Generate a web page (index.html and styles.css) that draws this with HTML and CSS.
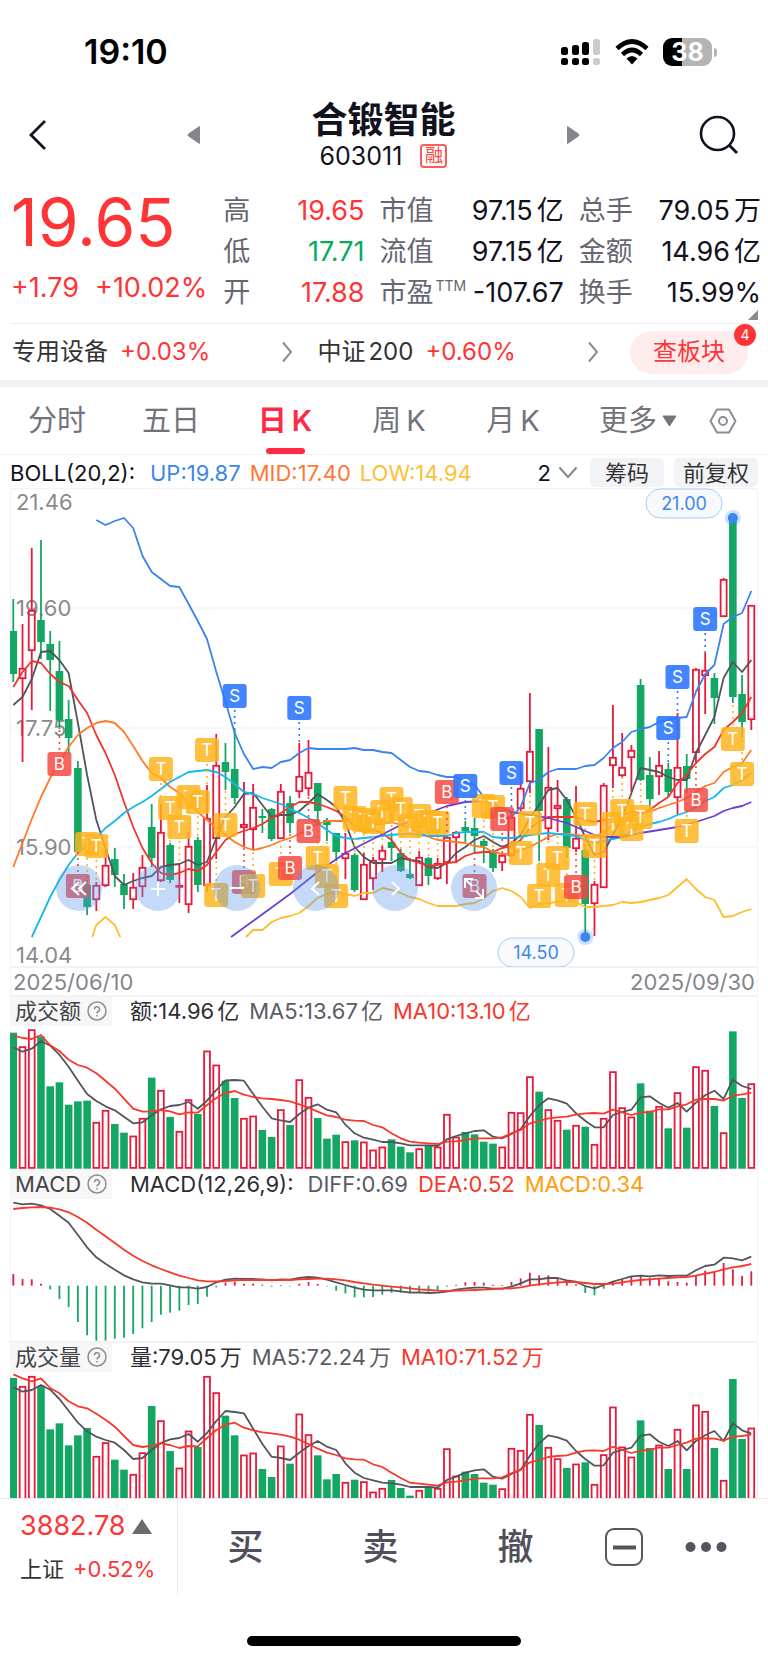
FILE: index.html
```html
<!DOCTYPE html>
<html lang="zh-CN">
<head>
<meta charset="utf-8">
<meta name="viewport" content="width=device-width, initial-scale=1">
<title>合锻智能 603011</title>
<link rel="stylesheet" href="styles.css">
</head>
<body>
<div class="status">
  <span class="clock">19:10</span>
  <div class="status-icons">
    <svg width="40" height="28" viewBox="0 0 40 28" aria-label="信号"><g fill="#000"><rect x="0" y="9" width="7" height="8" rx="2.5"/><rect x="11" y="7" width="7" height="10" rx="2.5"/><rect x="21" y="4" width="7" height="13" rx="2.5"/><rect x="0" y="20" width="7" height="7" rx="2.5"/><rect x="11" y="20" width="7" height="7" rx="2.5"/><rect x="21" y="20" width="7" height="7" rx="2.5"/></g><g fill="#ccc"><rect x="32" y="1" width="7" height="16" rx="2.5"/><rect x="32" y="20" width="7" height="7" rx="2.5"/></g></svg>
    <svg width="34" height="26" viewBox="0 0 34 26" aria-label="无线网络"><g fill="none" stroke="#000" stroke-width="4.6"><path d="M2 9.5Q17-4.500 32 9.500"/><path d="M7.500 15.500Q17 6.500 26.500 15.500"/></g><path d="M11.500 19.500Q17 14.500 22.500 19.500L17 25.500Z"/></svg>
    <div class="battery"><span>38</span></div>
  </div>
</div>

<header class="head">
  <button class="icon-btn" aria-label="返回"><svg width="20" height="32" viewBox="0 0 20 32"><path d="M17 2L3 16l14 14" fill="none" stroke="#12121e" stroke-width="2.8"/></svg></button>
  <button class="icon-btn" aria-label="上一只"><svg width="14" height="20" viewBox="0 0 14 20"><path d="M12.500 1.500v17L1.500 11q-1-1 0-2Z" fill="#85858f" stroke="#85858f" stroke-linejoin="round"/></svg></button>
  <div class="title">
    <h1>合锻智能</h1>
    <p>603011<span class="margin-tag">融</span></p>
  </div>
  <button class="icon-btn" aria-label="下一只"><svg width="14" height="20" viewBox="0 0 14 20"><path d="M1.500 1.500v17L12.500 11q1-1 0-2Z" fill="#85858f" stroke="#85858f" stroke-linejoin="round"/></svg></button>
  <button class="icon-btn" aria-label="搜索"><svg width="40" height="40" viewBox="0 0 40 40"><circle cx="18.500" cy="18.500" r="16.500" fill="none" stroke="#12121e" stroke-width="2.600"/><path d="M30 30l8 8" stroke="#12121e" stroke-width="2.800"/></svg></button>
</header>

<section class="quote">
  <div class="price">
    <strong>19.65</strong>
    <div class="change"><span>+1.79</span><span>+10.02%</span></div>
  </div>
  <dl class="facts">
    <div><dt>高</dt><dd class="up">19.65</dd></div>
    <div><dt>低</dt><dd class="down">17.71</dd></div>
    <div><dt>开</dt><dd class="up">17.88</dd></div>
  </dl>
  <dl class="facts">
    <div><dt>市值</dt><dd>97.15<i>亿</i></dd></div>
    <div><dt>流值</dt><dd>97.15<i>亿</i></dd></div>
    <div><dt>市盈<sup>TTM</sup></dt><dd>-107.67</dd></div>
  </dl>
  <dl class="facts">
    <div><dt>总手</dt><dd>79.05<i>万</i></dd></div>
    <div><dt>金额</dt><dd>14.96<i>亿</i></dd></div>
    <div><dt>换手</dt><dd>15.99%</dd></div>
  </dl>
  <svg class="corner" width="10" height="10" viewBox="0 0 10 10"><path d="M10 0v10H0Z" fill="#8a8a94"/></svg>
</section>

<section class="sectors">
  <a href="#equipment"><span>专用设备</span><em>+0.03%</em><svg width="12" height="22" viewBox="0 0 12 22"><path d="M2 1.500l8 9.500-8 9.500" fill="none" stroke="#8c8c94" stroke-width="2"/></svg></a>
  <a href="#csi200"><span>中证<i>200</i></span><em>+0.60%</em><svg width="12" height="22" viewBox="0 0 12 22"><path d="M2 1.500l8 9.500-8 9.500" fill="none" stroke="#8c8c94" stroke-width="2"/></svg></a>
  <button class="board">查板块<b>4</b></button>
</section>

<nav class="tabs">
  <button>分时</button>
  <button>五日</button>
  <button class="active">日<i>K</i></button>
  <button>周<i>K</i></button>
  <button>月<i>K</i></button>
  <button>更多<svg width="15" height="12" viewBox="0 0 15 12"><path d="M1 1h13L7.500 11Z" fill="#73737c" stroke="#73737c" stroke-linejoin="round"/></svg></button>
  <button class="gear" aria-label="设置"><svg width="28" height="28" viewBox="0 0 28 28"><path d="M8 2.500h12L26.500 14 20 25.500H8L1.500 14Z" fill="none" stroke="#8c8c94" stroke-width="2" stroke-linejoin="round"/><circle cx="14" cy="14" r="4" fill="none" stroke="#8c8c94" stroke-width="2"/></svg></button>
</nav>

<section class="indicator">
  <span>BOLL(20,2):</span><span class="c-up">UP:19.87</span><span class="c-mid">MID:17.40</span><span class="c-low">LOW:14.94</span>
  <div class="tools">
    <button class="count">2<svg width="20" height="13" viewBox="0 0 20 13"><path d="M1.500 1.500L10 11l8.500-9.500" fill="none" stroke="#85858f" stroke-width="2"/></svg></button>
    <button class="chip">筹码</button>
    <button class="chip">前复权</button>
  </div>
</section>

<main class="charts">
  <div class="kline">
    <svg id="kline" viewBox="10 0 748 479" role="img" aria-label="日K线"></svg>
    <div class="controls">
      <button aria-label="最早"><svg viewBox="0 0 46 46"><path d="M23 17l-7 6.500 7 6.500M30 17l-7 6.500 7 6.500"/></svg></button>
      <button aria-label="放大"><svg viewBox="0 0 46 46"><path d="M23 17v14M16 24h14"/></svg></button>
      <button aria-label="缩小"><svg viewBox="0 0 46 46"><path d="M16 23h14"/></svg></button>
      <button aria-label="左移"><svg viewBox="0 0 46 46"><path d="M26 17l-7 6.500 7 6.500"/></svg></button>
      <button aria-label="右移"><svg viewBox="0 0 46 46"><path d="M20 17l7 6.500-7 6.500"/></svg></button>
      <button aria-label="全屏"><svg viewBox="0 0 46 46"><path d="M14 23v-9h8M14 14l7 7M32 24v9h-8M32 33l-7-7"/></svg></button>
    </div>
  </div>
  <div class="dates"><time>2025/06/10</time><time>2025/09/30</time></div>

  <section class="panel">
    <div class="legend"><button>成交额<svg class="help" viewBox="0 0 20 20"><circle cx="10" cy="10" r="9"/><path d="M7.500 8.300a2.500 2.500 0 1 1 3.700 2.200c-.9.500-1.200.9-1.200 1.900M10 14v1.500"/></svg></button><span>额:14.96<i>亿</i></span><span class="c-ma5">MA5:13.67<i>亿</i></span><span class="c-ma10">MA10:13.10<i>亿</i></span></div>
    <svg id="amount" viewBox="10 0 748 143" role="img" aria-label="成交额"></svg>
  </section>
  <section class="panel">
    <div class="legend"><button>MACD<svg class="help" viewBox="0 0 20 20"><circle cx="10" cy="10" r="9"/><path d="M7.500 8.300a2.500 2.500 0 1 1 3.700 2.200c-.9.500-1.200.9-1.200 1.900M10 14v1.500"/></svg></button><span>MACD(12,26,9):</span><span class="c-ma5 wide">DIFF:0.69</span><span class="c-ma10">DEA:0.52</span><span class="c-macd">MACD:0.34</span></div>
    <svg id="macd" viewBox="10 0 748 143" role="img" aria-label="MACD"></svg>
  </section>
  <section class="panel">
    <div class="legend"><button>成交量<svg class="help" viewBox="0 0 20 20"><circle cx="10" cy="10" r="9"/><path d="M7.500 8.300a2.500 2.500 0 1 1 3.700 2.200c-.9.500-1.200.9-1.200 1.900M10 14v1.500"/></svg></button><span>量:79.05<i>万</i></span><span class="c-ma5">MA5:72.24<i>万</i></span><span class="c-ma10">MA10:71.52<i>万</i></span></div>
    <svg id="volume" viewBox="10 0 748 126" role="img" aria-label="成交量"></svg>
  </section>
</main>

<footer class="bottom">
  <a class="index" href="#sse">
    <span class="points">3882.78<svg width="20" height="15" viewBox="0 0 20 15"><path d="M10 0l10 15H0Z" fill="#6b6b6b"/></svg></span>
    <span class="name">上证<em>+0.52%</em></span>
  </a>
  <div class="actions">
    <button>买</button>
    <button>卖</button>
    <button>撤</button>
    <button class="small" aria-label="移除自选"><svg width="38" height="38" viewBox="0 0 38 38"><rect x="1" y="1" width="36" height="36" rx="8" fill="none" stroke="#55555f" stroke-width="2"/><path d="M8 19.500h23" stroke="#55555f" stroke-width="4"/></svg></button>
    <button class="small" aria-label="更多"><svg width="42" height="12" viewBox="0 0 42 12"><g fill="#55555f"><circle cx="5.500" cy="6" r="5"/><circle cx="21" cy="6" r="5"/><circle cx="36.500" cy="6" r="5"/></g></svg></button>
  </div>
</footer>
<div class="home"></div>
<script src="charts.js"></script>
</body>
</html>
```
FILE: styles.css
```css
* { box-sizing: border-box; }
body {
  margin: 0;
  background: #fff;
  color: #12121e;
  font-family: Inter, "Noto Sans CJK SC", sans-serif;
  font-size: 22px;
  line-height: 30px;
}
button { border: 0; padding: 0; background: none; color: inherit; font: inherit; cursor: pointer; }
a { color: inherit; text-decoration: none; }
i, em { font-style: normal; }
h1, p, dl, dd { margin: 0; }
svg { display: block; flex: none; }
.up { color: #ff3436; }
.down { color: #07ab5c; }
.c-up { color: #3c86ee; }
.c-mid { color: #ff7733; }
.c-low { color: #ffc038; }
.c-ma5 { color: #5b5b66; }
.c-ma10 { color: #f6392c; }
.c-macd { color: #ff9d0a; }

.status { display: flex; justify-content: space-between; align-items: center; height: 90px; padding: 14px 52px 0 84px; color: #000; }
.clock { font-size: 34px; font-weight: 600; }
.status-icons { display: flex; align-items: center; gap: 14px; }
.battery { position: relative; width: 49px; height: 28px; margin-right: 4px; border-radius: 9px; background: linear-gradient(90deg, #000 38%, #b4b4b4 38%); color: #fff; font-size: 25px; font-weight: 700; line-height: 28px; text-align: center; }
.battery::after { content: ""; position: absolute; left: 51px; top: 10px; width: 3px; height: 9px; border-radius: 0 4px 4px 0; background: #b4b4b4; }

.head { display: grid; grid-template-columns: 86fr 160fr 220fr 160fr 86fr; align-items: center; height: 90px; padding: 0 29px 0 28px; }
.icon-btn { display: flex; justify-content: center; }
.icon-btn:first-child { justify-content: flex-start; }
.icon-btn:last-child { justify-content: flex-end; }
.title { text-align: center; }
.title h1 { font-size: 36px; font-weight: 600; line-height: 42px; }
.title p { display: flex; justify-content: center; align-items: center; gap: 18px; font-size: 25px; line-height: 30px; }
.margin-tag { width: 27px; height: 24px; border: 2px solid #ff5a5a; border-radius: 4px; color: #ff4444; font-size: 18px; line-height: 19px; }

.quote { position: relative; display: grid; grid-template-columns: 197fr 141fr 184fr 182fr; column-gap: 15px; height: 144px; margin: 0 7px 0 11px; border-bottom: 1px solid #efeff2; }
.price { color: #ff3436; white-space: nowrap; }
.price strong { display: block; padding-top: 10px; font-size: 66px; font-weight: 400; line-height: 64px; }
.change { display: flex; gap: 16px; padding-top: 18px; font-size: 27px; line-height: 32px; }
.facts { padding-top: 10px; font-size: 27px; white-space: nowrap; }
.facts div { display: flex; justify-content: space-between; height: 41px; line-height: 41px; }
.facts dt { position: relative; color: #666672; }
.facts i { margin-left: 4px; }
.facts sup { position: absolute; left: 56px; top: 5px; font-size: 14px; line-height: 18px; }
.corner { position: absolute; right: 3px; bottom: 3px; }

.sectors { display: grid; grid-template-columns: 305fr 312fr 118px; align-items: center; height: 56px; padding: 0 20px 0 12px; font-size: 24px; color: #333; }
.sectors a { display: flex; align-items: center; padding-right: 24px; }
.sectors a + a { padding-right: 31px; }
.sectors em { margin-left: 12px; color: #ff3436; }
.sectors i { margin-left: 3px; }
.sectors a svg { margin-left: auto; }
.board { position: relative; height: 43px; border-radius: 22px; background: #ffeded; color: #ff3436; font-size: 24px; }
.board b { position: absolute; right: -8px; top: -7px; width: 22px; height: 22px; border-radius: 50%; background: #ff3436; color: #fff; font-size: 14px; font-weight: 400; line-height: 22px; }

.tabs { display: grid; grid-template-columns: repeat(5, 114fr) 136fr 62fr; height: 75px; border-top: 7px solid #f0f1f5; border-bottom: 1px solid #f2f2f4; color: #73737c; font-size: 29px; }
.tabs button { position: relative; display: flex; justify-content: center; align-items: center; gap: 5px; }
.tabs .active { color: #ff2a45; font-weight: 600; }
.tabs .active::after { content: ""; position: absolute; bottom: 0; width: 39px; height: 6px; border-radius: 3px; background: #ff2a45; }
.tabs .gear { justify-content: flex-start; padding-left: 3px; }

.indicator { display: flex; align-items: center; height: 33px; padding: 2px 10px 0; white-space: nowrap; }
.indicator .c-up { margin-left: 15px; }
.indicator .c-mid, .indicator .c-low { margin-left: 9px; }
.tools { display: flex; align-items: center; gap: 10px; margin-left: auto; }
.count { display: flex; align-items: center; gap: 7px; margin-right: 2px; }
.chip { height: 29px; padding: 0 15px; border-radius: 5px; background: #f2f3f7; color: #333; line-height: 30px; }
.chip:last-child { padding: 0 9px; }

.charts { padding: 0 10px; }
.charts > div > svg, .panel > svg { width: 100%; height: auto; }
.kline, .dates, .panel { position: relative; box-shadow: inset 0 0 0 1px #f3f3f5; }
.controls { position: absolute; left: 46px; top: 377px; display: flex; gap: 33px; }
.controls button { width: 46px; height: 46px; border-radius: 50%; background: rgba(92, 152, 235, 0.36); }
.controls path { fill: none; stroke: #fff; stroke-width: 2; }
.dates { display: flex; justify-content: space-between; height: 29px; padding: 0 3px; color: #85858c; line-height: 31px; }
.legend { display: flex; align-items: center; height: 30px; color: #2d2d33; line-height: 32px; white-space: nowrap; }
.legend button { display: flex; align-items: center; justify-content: flex-start; gap: 6px; width: 102px; height: 29px; margin-right: 18px; padding-left: 5px; background: #f7f7f8; color: #44444a; }
.legend span + span { margin-left: 10px; }
.legend span + .wide { margin-left: 14px; }
.legend i { margin-left: 3px; }
.help { width: 20px; height: 20px; fill: none; stroke: #8c8c94; stroke-width: 1.5px; }

.up-box { fill: none; stroke: #e8193a; stroke-width: 1.8px; }
.up-line { stroke: #e8193a; stroke-width: 1.8px; }
.down-box { fill: #14a763; }
.down-line { stroke: #14a763; stroke-width: 1.8px; }
.curve { fill: none; stroke-width: 1.8px; stroke-linejoin: round; }
.grid-line { stroke: #f1f1f3; }
.scale { fill: #8a8a8a; font-size: 22px; }
.mark text { fill: #fff; font-size: 17px; text-anchor: middle; }
.leader { stroke-width: 1.6px; stroke-dasharray: 2 4; }
.pill rect { fill: #f8f9fb; stroke: #a9cbf7; }
.pill text { fill: #3c86ee; font-size: 18px; text-anchor: middle; }

.bottom { display: flex; height: 97px; border-top: 1px solid #ebebee; }
.index { flex: none; display: block; width: 178px; padding: 9px 0 0 20px; border-right: 1px solid #ebebee; }
.points, .name { display: flex; align-items: center; }
.points { gap: 6px; height: 36px; color: #ff3436; font-size: 27px; }
.name { gap: 9px; height: 50px; color: #333; }
.name em { color: #ff3436; }
.actions { flex: 1; display: grid; grid-template-columns: repeat(3, 135fr) 80fr 105fr; align-items: center; color: #50505c; font-size: 36px; font-weight: 500; }
.actions button { display: flex; justify-content: center; line-height: 48px; }
.actions .small { justify-content: flex-start; padding-left: 22px; }
.home { width: 274px; height: 10px; margin: 41px auto 17px; border-radius: 5px; background: #000; }
```
FILE: charts.js
```js
const NS = "http://www.w3.org/2000/svg";
const X0 = 13.3;
const STEP = 9.225;
const BODY = 7;
const xAt = i => X0 + STEP * i;

function add(parent, name, attrs, text) {
  const el = document.createElementNS(NS, name);
  for (const key in attrs) el.setAttribute(key, attrs[key]);
  if (text !== undefined) el.textContent = text;
  parent.appendChild(el);
  return el;
}

function curve(svg, color, points) {
  const d = points.map(([i, y]) => xAt(i).toFixed(1) + "," + y.toFixed(1)).join(" ");
  add(svg, "polyline", { class: "curve", stroke: color, points: d });
}

const series = (start, list) => list.map((y, k) => [start + k, y]);

/* direction (1 = rising), high, body top, body bottom, low */
const candles = [
  [0,111,143,186,194],[1,136,180,191,274],[1,60,122,163,222],[0,52,132,154,171],[0,143,156,172,223],
  [0,153,183,232,241],[0,212,231,250,266],[0,273,280,364,364],[0,392,397,419,427],[1,394,397,412,423],
  [1,362,377,398,399],[0,360,371,387,399],[0,386,396,407,421],[1,385,399,412,421],[1,367,379,399,409],
  [0,316,339,370,379],[1,316,344,393,394],[0,355,357,392,395],[1,375,397,399,415],[1,344,358,417,425],
  [0,349,352,397,404],[1,297,330,398,404],[1,246,277,351,371],[0,255,274,284,302],[0,242,281,310,316],
  [1,294,336,340,359],[1,296,319,342,361],[0,321,328,330,345],[0,320,321,351,353],[1,296,303,351,351],
  [0,308,315,335,345],[1,255,288,304,310],[1,252,284,301,308],[0,295,295,323,334],[0,330,332,337,353],
  [0,345,345,364,373],[1,345,365,371,391],[0,365,367,402,404],[1,365,376,412,412],[1,369,372,391,402],
  [1,358,362,372,384],[0,345,354,360,373],[0,361,365,383,384],[0,370,386,390,391],[1,363,369,398,398],
  [0,369,370,388,397],[1,370,375,391,392],[1,347,349,375,396],[1,343,344,350,375],[0,333,339,343,354],
  [0,330,340,348,365],[0,351,353,358,375],[0,361,365,380,384],[1,365,367,375,383],[1,325,329,368,369],
  [1,276,300,321,324],[1,205,263,294,305],[0,241,241,323,373],[1,259,299,341,352],[1,292,317,321,344],
  [0,309,311,360,370],[1,298,350,361,364],[0,360,362,416,445],[1,393,396,416,448],[1,295,297,400,400],
  [1,217,269,278,300],[1,245,279,288,289],[1,257,262,270,304],[0,191,197,292,293],[0,269,287,311,322],
  [1,263,277,289,307],[0,275,281,304,309],[1,225,279,310,326],[0,266,278,291,305],[1,180,181,265,276],
  [1,165,182,188,226],[0,185,190,210,236],[1,90,91,129,129],[0,30,30,209,215],[0,187,206,234,250],
  [1,117,117,232,242]
];

const upper = series(9, [32,37,33,30,40,68,84,91,98,99,116,133,151,184,214,245,266,281,279,280,274,272,265,260,261,261,261,261,260,262,262,264,265,272,279,283,284,287,289,289,294,297,309,320,329,329,319,295,292,284,281,281,281,278,277,270,260,254,244,241,239,234,232,230,229,204,186,177,136,129,125,103]);
const middle = series(0, [379,355,331,309,290,274,259,247,240,235,233,235,244,258,273,285,290,299,305,315,324,332,340,347,354,359,362,360,357,353,350,346,341,336,333,333,333,334,335,336,336,334,337,340,344,349,352,353,354,355,358,359,364,366,366,362,359,354,349,346,346,347,348,349,344,337,334,329,325,324,320,317,314,310,304,298,295,284,279,275,262]);
const ma60 = series(2, [449,429,409,392,377,365,357,350,340,333,325,319,314,308,301,294,289,284,283,282,284,289,296,304,306,310,313,316,321,325,330,335,342,348,350,351,350,349,348,347,346,346,347,348,348,348,345,344,344,344,349,350,350,349,347,346,345,346,347,348,352,355,353,351,349,343,339,336,334,331,327,324,319,313,309,300,297,292,285]);
const ma120 = [[23.6,449],[30,406],[33,384],[36,365],[39,351],[42,337],[45,325],[47,318],[49,314],[51,313],[52,317],[53,320],[54,324],[56,327],[58,330],[60,335],[62,343],[63,347],[64,349],[66,349],[68,345],[70,342],[72,339],[74,334],[76,328],[77,323],[78,320],[79,318],[80,314]];
const lowerA = [[8.55,449],[9,437],[10,429],[11,437],[11.6,449]];
const lowerB = [[25.2,449]].concat(series(26, [442,442,434,430,428,425,418,410,406,404,406,408,405,405,400,402,405,409,411,415,418,418,418,416,415,410,403,400,403,409,420,416,415,414,412,414,419,419,418,417,414,415,414,412,410,407,399,391,401,409,412,429,428,424,421]));
const ma5 = series(0, [217,209,191,164,163,172,185,235,287,332,360,388,397,393,390,388,379,377,376,372,377,374,350,329,319,306,305,317,329,327,327,323,315,306,312,319,335,359,369,375,375,375,370,372,373,379,380,375,365,359,352,348,354,359,355,347,330,317,302,300,312,329,349,367,364,347,330,305,280,282,284,289,292,292,265,247,229,190,174,184,172]);
const ma10 = series(0, [199,184,173,175,186,194,198,212,225,247,265,287,314,339,360,375,385,387,385,381,383,377,364,352,346,343,340,336,330,325,319,314,314,316,319,323,329,339,344,342,345,352,365,372,375,378,377,375,374,368,365,364,364,360,358,352,340,334,329,329,329,329,332,334,332,330,327,324,324,322,315,309,295,287,275,266,259,242,234,225,209]);

/* trade marks: letter, candle index, centre y, y where the leader meets the candle */
const marks = [
  ["T",8,356,392],["T",9,358,394],["T",16,281,316],["T",17,320,356],["T",19,309,344],["T",20,314,349],["T",18,339,375],
  ["T",21,262,297],["T",23,337,302],["T",22,407,371],["T",29,386,351],["T",33,370,334],["T",34,388,353],
  ["T",35,408,373],["T",36,310,345],["T",37,330,365],["T",38,332,365],["T",39,334,369],["T",40,324,358],["T",41,311,345],
  ["T",42,321,361],["T",43,338,370],["T",44,328,363],["T",45,334,369],["T",46,335,370],["T",51,318,351],["T",52,319,361],
  ["T",55,365,324],["T",56,335,305],["T",57,408,373],["T",58,387,352],["T",59,370,344],["T",60,407,370],["T",62,326,360],
  ["T",63,358,393],["T",65,336,300],["T",66,323,289],["T",67,341,304],["T",68,329,293],["T",73,343,305],["T",78,251,215],
  ["T",79,286,250],
  ["B",5,276,241],["B",7,398,364],["B",25,394,359],["T",26,398,361],["B",30,380,345],["B",32,343,308],["B",47,304,347],["B",50,398,365],
  ["B",53,331,365],["B",61,399,364],["B",74,312,276],
  ["S",24,208,242],["S",31,220,255],["S",49,298,333],["S",54,285,325],["S",71,240,275],["S",72,189,225],["S",75,131,165]
];
const markColor = { T: "#ffb41e", B: "#f4483f", S: "#2f78ff" };

function drawKline() {
  const svg = document.getElementById("kline");
  [120, 240, 359].forEach(y => add(svg, "line", { class: "grid-line", x1: 10, x2: 758, y1: y, y2: y }));
  [["21.46", 22], ["19.60", 128], ["17.75", 248], ["15.90", 367], ["14.04", 475]].forEach(([t, y]) =>
    add(svg, "text", { class: "scale", x: 16, y }, t));
  candles.forEach(([up, high, top, bottom, low], i) => {
    const x = xAt(i);
    const cls = up ? "up" : "down";
    add(svg, "line", { class: cls + "-line", x1: x, x2: x, y1: high, y2: top });
    add(svg, "line", { class: cls + "-line", x1: x, x2: x, y1: bottom, y2: low });
    const inset = up ? 0.8 : 0;
    const half = BODY / 2 - inset + 0.3;
    add(svg, "rect", { class: cls + "-box", x: x - half, y: top + inset, width: half * 2, height: Math.max(bottom - top - inset * 2, 1) });
  });
  curve(svg, "#54545f", ma5);
  curve(svg, "#f0342c", ma10);
  curve(svg, "#ff7a26", middle);
  curve(svg, "#14b8ef", ma60);
  curve(svg, "#6d3fd0", ma120);
  curve(svg, "#3a82ee", upper);
  curve(svg, "#ffbc2c", lowerA);
  curve(svg, "#ffbc2c", lowerB);
  marks.forEach(([letter, i, y, end]) => {
    const x = xAt(i);
    const from = end > y ? y + 14 : y - 14;
    add(svg, "line", { class: "leader", stroke: markColor[letter], x1: x, x2: x, y1: from, y2: end });
    const g = add(svg, "g", { class: "mark" });
    add(g, "rect", { x: x - 12, y: y - 12, width: 24, height: 24, rx: 3, fill: markColor[letter], "fill-opacity": letter === "S" ? 0.9 : 0.84 });
    add(g, "text", { x, y: y + 6 }, letter);
  });
  [[78, 30, 684, 15, "21.00"], [62, 449, 536, 464, "14.50"]].forEach(([i, y, px, py, label]) => {
    add(svg, "circle", { cx: xAt(i), cy: y, r: 8, fill: "#3c86ee", "fill-opacity": 0.25 });
    add(svg, "circle", { cx: xAt(i), cy: y, r: 5, fill: "#3c86ee" });
    const g = add(svg, "g", { class: "pill" });
    add(g, "rect", { x: px - 38, y: py - 14, width: 76, height: 29, rx: 14.5 });
    add(g, "text", { x: px, y: py + 7 }, label);
  });
}

/* Panel data is kept on a grid of thirds; top is the grid value at the panel's upper edge. */
function drawBars(id, top, base, tops, fast, slow) {
  const svg = document.getElementById(id);
  const y = v => (v - top) / 3;
  tops.forEach((v, i) => {
    const up = candles[i][0];
    const half = up ? 2.9 : 3.8;
    const inset = up ? 0.8 : 0;
    add(svg, "rect", { class: up ? "up-box" : "down-box", x: xAt(i) - half, y: y(v) + inset, width: half * 2, height: y(base) - y(v) - inset * 2 });
  });
  curve(svg, "#54545f", series(0, fast.map(y)));
  curve(svg, "#f6392c", series(0, slow.map(y)));
}

function drawMacd(top, zero, bars, diff, dea) {
  const svg = document.getElementById("macd");
  const y = v => (v - top) / 3;
  bars.forEach((v, i) => add(svg, "line", { class: v < zero ? "up-line" : "down-line", x1: xAt(i), x2: xAt(i), y1: y(zero), y2: y(v) }));
  curve(svg, "#54545f", series(0, diff.map(y)));
  curve(svg, "#f6392c", series(0, dea.map(y)));
}

drawKline();
drawBars("amount", 198, 626,
  [218,259,208,230,379,367,434,424,422,486,450,492,518,527,474,353,390,471,513,418,462,272,314,362,414,474,467,510,531,448,495,358,411,474,536,524,544,541,545,569,560,538,560,577,565,555,560,462,530,516,523,545,551,560,456,457,349,395,448,480,509,495,500,552,474,334,442,470,370,452,438,505,397,503,319,330,438,517,214,414,370],
  [262,275,266,243,257,284,320,362,402,423,439,451,470,490,487,466,448,438,435,426,446,422,390,361,360,362,402,440,475,481,486,462,443,433,449,457,494,520,533,539,546,546,550,556,556,556,558,538,528,520,513,511,530,535,522,507,468,436,415,421,431,460,482,502,502,465,456,449,412,409,428,443,429,455,428,406,392,417,359,378,387],
  [227,234,237,225,256,273,299,315,323,340,362,386,416,446,455,454,450,454,463,457,458,435,414,399,393,404,411,415,417,420,424,433,443,455,466,471,479,482,483,495,502,520,535,545,548,550,552,545,544,540,535,535,535,532,520,510,490,483,475,472,470,464,460,459,461,449,457,465,458,456,448,448,439,433,419,417,417,422,407,403,398]);
drawMacd(87, 347,
  [312,327,328,341,358,387,411,456,496,512,512,506,503,492,475,456,434,428,422,405,402,380,352,338,335,341,341,344,350,345,349,341,336,342,349,362,370,382,382,381,374,368,368,369,369,365,362,350,344,337,336,338,344,345,336,325,308,316,316,324,338,343,369,376,356,336,328,320,318,323,326,334,336,338,318,302,305,279,298,318,304],
  [98,103,101,106,117,137,158,195,232,262,281,299,316,328,337,341,341,346,352,352,356,351,337,329,326,327,327,328,331,328,329,324,321,323,329,337,345,353,359,361,361,361,364,368,367,369,368,365,359,355,353,353,356,356,350,340,328,328,324,324,331,335,348,355,345,335,327,319,317,319,316,318,317,317,301,288,284,263,265,271,260],
  [117,114,112,111,113,118,127,141,158,179,199,219,239,257,273,286,297,307,317,324,331,334,334,333,331,330,330,330,330,330,330,328,327,326,326,328,331,336,340,344,347,350,352,355,358,360,362,363,362,361,360,359,357,356,355,352,347,343,340,337,336,336,339,342,342,341,337,333,330,328,326,324,322,321,317,311,306,298,292,288,282]);
drawBars("volume", 96, 482,
  [114,138,108,137,268,250,316,286,264,348,307,359,389,402,337,198,241,333,383,272,321,108,157,227,286,344,338,387,411,317,371,221,283,346,418,402,426,419,424,455,444,420,444,467,450,440,444,325,407,395,402,428,434,445,324,330,222,255,321,355,384,371,367,432,343,200,320,350,241,324,314,387,267,387,194,213,324,420,117,297,263],
  [141,155,150,135,149,177,212,248,274,290,300,308,330,357,354,330,309,298,294,282,305,279,243,213,216,220,266,312,350,354,360,338,318,303,320,330,370,398,414,421,428,430,434,441,441,441,443,420,410,398,391,388,410,416,402,390,347,310,286,292,302,333,357,377,376,338,330,323,287,283,305,318,303,331,303,286,273,303,250,271,281],
  [103,115,124,115,144,160,184,199,205,221,239,260,288,315,321,317,310,315,324,318,319,294,270,254,248,263,271,277,280,284,290,299,312,326,338,345,355,358,359,373,381,398,414,428,431,434,437,427,425,421,415,415,415,412,400,388,367,360,351,348,346,338,332,331,333,320,330,339,332,330,322,323,315,308,296,295,296,302,290,288,284]);
```
